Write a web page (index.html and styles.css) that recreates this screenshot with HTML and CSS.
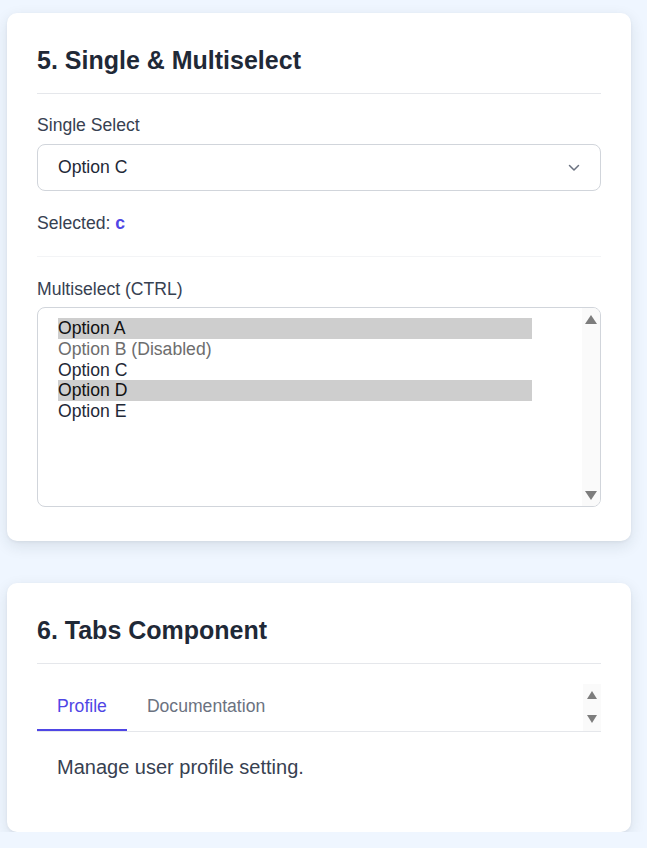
FILE: index.html
```html
<!DOCTYPE html>
<html lang="en">
<head>
<meta charset="utf-8">
<title>Components</title>
<link rel="stylesheet" href="styles.css">
</head>
<body>
<div class="page">
  <section class="card card-select">
    <h2 class="card-title">5. Single &amp; Multiselect</h2>
    <div class="group group-single">
      <label class="field-label">Single Select</label>
      <div class="select">
        <span class="select-value">Option C</span>
        <svg class="chevron" width="12" height="8" viewBox="0 0 12 8"><polyline points="1.5,1.5 6,6 10.5,1.5" fill="none" stroke="#6b7280" stroke-width="1.5" stroke-linecap="round" stroke-linejoin="round"/></svg>
      </div>
      <p class="selected-text">Selected: <strong class="selected-val">c</strong></p>
    </div>
    <div class="group group-multi">
      <label class="field-label field-label-multi">Multiselect (CTRL)</label>
      <div class="multi">
        <div class="multi-list">
          <div class="opt opt-on">Option A</div>
          <div class="opt opt-disabled">Option B (Disabled)</div>
          <div class="opt">Option C</div>
          <div class="opt opt-on">Option D</div>
          <div class="opt">Option E</div>
        </div>
        <div class="sbar">
          <span class="arrow arrow-up"></span>
          <span class="arrow arrow-down"></span>
        </div>
      </div>
    </div>
  </section>

  <section class="card card-tabs">
    <h2 class="card-title">6. Tabs Component</h2>
    <div class="tablist">
      <div class="tab tab-active">Profile</div>
      <div class="tab">Documentation</div>
      <div class="tab-spacer"></div>
      <div class="sbar sbar-tabs">
        <span class="arrow arrow-up arrow-sm"></span>
        <span class="arrow arrow-down arrow-sm"></span>
      </div>
    </div>
    <div class="tabpanel">Manage user profile setting.</div>
  </section>
</div>
</body>
</html>
```

FILE: styles.css
```css
html, body {
  margin: 0;
  padding: 0;
  background: #eff6ff;
  font-family: "Liberation Sans", Arial, sans-serif;
  color: #1f2937;
}

.page {
  padding: 13px 16px 0 7px;
  display: flex;
  flex-direction: column;
  gap: 42px;
}

.card {
  background: #ffffff;
  border-radius: 10px;
  padding: 32px 30px 30px;
  box-shadow: 0 5px 15px rgba(30, 41, 59, 0.11), 0 1px 3px rgba(30, 41, 59, 0.06);
}

.card-title {
  margin: 0;
  font-size: 25px;
  line-height: 30px;
  font-weight: 700;
  color: #1f2937;
  padding-bottom: 18px;
  border-bottom: 1px solid #e5e7eb;
}

.card-select .card-title {
  margin-bottom: 21px;
}

.field-label {
  display: block;
  font-size: 17.6px;
  line-height: 20px;
  color: #374151;
  margin-bottom: 9px;
}

.field-label-multi {
  margin-bottom: 8px;
}

.group-single {
  padding-bottom: 23px;
  border-bottom: 1px solid #f3f4f6;
  margin-bottom: 22px;
}

.select {
  display: flex;
  align-items: center;
  justify-content: space-between;
  height: 47px;
  box-sizing: border-box;
  padding: 0 20px;
  border: 1px solid #d1d5db;
  border-radius: 8px;
  background: #fff;
}

.select-value {
  font-size: 17.6px;
  color: #1f2937;
}

.chevron {
  display: block;
}

.selected-text {
  margin: 22px 0 0;
  font-size: 17.6px;
  line-height: 20px;
  color: #374151;
}

.selected-val {
  color: #4f46e5;
  font-weight: 700;
}

.group-multi {
  margin-bottom: 4px;
}

.multi {
  display: flex;
  height: 200px;
  box-sizing: border-box;
  border: 1px solid #d1d5db;
  border-radius: 8px;
  overflow: hidden;
  background: #fff;
}

.multi-list {
  flex: 1;
  padding: 10px 50px 10px 20px;
}

.opt {
  font-size: 17.6px;
  line-height: 20.8px;
  color: #1f2937;
}

.opt-on {
  background: #cecece;
  color: #111111;
}

.opt-disabled {
  color: #6d6d6d;
}

.sbar {
  width: 18px;
  background: #fafafa;
  display: flex;
  flex-direction: column;
  align-items: center;
  justify-content: space-between;
  padding: 7px 0 6px;
  box-sizing: border-box;
}

.arrow {
  width: 0;
  height: 0;
  border-left: 6px solid transparent;
  border-right: 6px solid transparent;
}

.arrow-up {
  border-bottom: 9px solid #7d7d7d;
}

.arrow-down {
  border-top: 9px solid #7d7d7d;
}

.arrow-sm {
  border-left-width: 5.5px;
  border-right-width: 5.5px;
}

.arrow-sm.arrow-up {
  border-bottom-width: 8px;
}

.arrow-sm.arrow-down {
  border-top-width: 8px;
}

.tablist {
  display: flex;
  margin-top: 20px;
  border-bottom: 1px solid #e5e7eb;
}

.tab {
  padding: 12px 20px;
  font-size: 17.6px;
  line-height: 20.7px;
  color: #6b7280;
  border-bottom: 2px solid transparent;
}

.tab-active {
  color: #4f46e5;
  border-bottom-color: #4f46e5;
}

.tab-spacer {
  flex: 1;
}

.sbar-tabs {
  padding: 7px 0 8px;
}

.tabpanel {
  padding: 20px 20px 20px;
  font-size: 20px;
  line-height: 30px;
  color: #374151;
}
```
